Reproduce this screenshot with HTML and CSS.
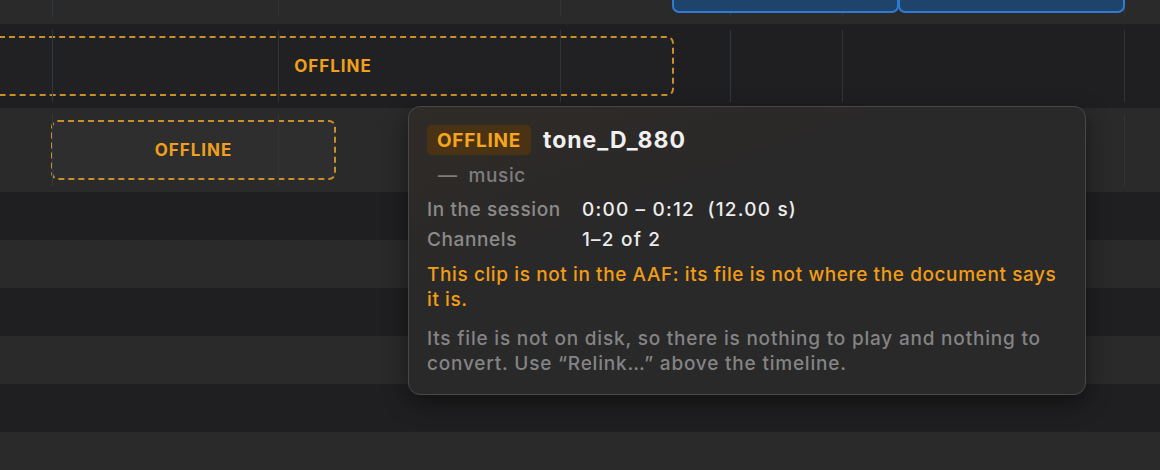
FILE: index.html
```html
<!DOCTYPE html>
<html lang="en">
<head>
<meta charset="utf-8">
<title>Timeline</title>
<link rel="stylesheet" href="styles.css">
</head>
<body>
<div class="timeline">
  <div class="lane lane-top light">
    <span class="grid blue" style="left:52px"></span>
    <span class="grid" style="left:278px"></span>
    <span class="grid" style="left:560px"></span>
    <span class="grid blue" style="left:730px"></span>
    <span class="grid" style="left:842px"></span>
    <span class="grid" style="left:1124px"></span>
    <div class="clip clip-online" style="left:672px;width:227px"></div>
    <div class="clip clip-online" style="left:898px;width:227px"></div>
  </div>
  <div class="lane lane-tall dark">
    <div class="clip clip-offline" style="left:-8px;width:682px"><span>OFFLINE</span></div>
    <span class="grid blue" style="left:52px"></span>
    <span class="grid" style="left:278px"></span>
    <span class="grid" style="left:560px"></span>
    <span class="grid blue" style="left:730px"></span>
    <span class="grid" style="left:842px"></span>
    <span class="grid" style="left:1124px"></span>
  </div>
  <div class="lane lane-tall light">
    <div class="clip clip-offline raised" style="left:51px;width:285px"><span>OFFLINE</span></div>
    <span class="grid blue" style="left:52px"></span>
    <span class="grid" style="left:278px"></span>
    <span class="grid" style="left:560px"></span>
    <span class="grid blue" style="left:730px"></span>
    <span class="grid" style="left:842px"></span>
    <span class="grid" style="left:1124px"></span>
  </div>
  <div class="lane dark"></div>
  <div class="lane light"></div>
  <div class="lane dark"></div>
  <div class="lane light"></div>
  <div class="lane dark"></div>
  <div class="lane light"></div>

  <div class="tooltip">
    <div class="tip-head">
      <span class="badge">OFFLINE</span>
      <span class="tip-title">tone_D_880</span>
    </div>
    <div class="tip-track"><span class="dash">—</span>music</div>
    <dl class="tip-meta">
      <dt>In the session</dt>
      <dd>0:00 – 0:12&nbsp; (12.00 s)</dd>
      <dt>Channels</dt>
      <dd>1–2 of 2</dd>
    </dl>
    <p class="tip-warn">This clip is not in the AAF: its file is not where the document says it is.</p>
    <p class="tip-note">Its file is not on disk, so there is nothing to play and nothing to convert. Use “Relink…” above the timeline.</p>
  </div>
</div>
</body>
</html>
```
FILE: styles.css
```css
* { box-sizing: border-box; }

html, body {
  margin: 0;
  padding: 0;
  background: #1f1f21;
  font-family: "Inter", "Noto Sans", sans-serif;
  overflow: hidden;
}

.timeline {
  position: relative;
  width: 1160px;
  height: 470px;
  display: flex;
  flex-direction: column;
}

.lane {
  position: relative;
  height: 48px;
  flex: none;
}
.lane.light { background: #2a2a2b; }
.lane.dark { background: #1f1f21; }
.lane-top { height: 24px; }
.lane-tall { height: 84px; }

/* beat lines drawn inside each clip lane */
.grid {
  position: absolute;
  top: 6px;
  bottom: 6px;
  width: 1px;
  background: #343437;
}
.grid.blue { background: #2c3a45; }
.lane-top .grid { top: 0; bottom: 7px; }

.clip {
  position: absolute;
  border-radius: 7px;
}

.clip-online {
  top: -40px;
  height: 53px;
  background: #1f446b;
  border: 2px solid #2f7bd3;
}

.clip-offline {
  top: 12px;
  bottom: 12px;
  border: 2px dashed #c88f2c;
  background: rgba(255, 255, 255, 0.012);
  display: flex;
  align-items: center;
  justify-content: center;
}
.clip-offline.raised { background: #2e2e2f; }
.clip-offline span {
  color: #f0a01c;
  font-weight: 700;
  font-size: 17px;
  letter-spacing: 1px;
}

.tooltip {
  position: absolute;
  left: 408px;
  top: 106px;
  width: 678px;
  height: 289px;
  padding: 18px 18px 0;
  border-radius: 12px;
  border: 1px solid #47474a;
  background: linear-gradient(160deg, #2f2b27 0%, #2a2929 35%, #29292a 100%);
  box-shadow: 0 8px 24px rgba(0, 0, 0, 0.45);
  color: #e9e9e9;
  font-size: 19px;
  font-weight: 500;
  letter-spacing: 0.6px;
}

.tip-head {
  display: flex;
  align-items: center;
  gap: 12px;
  height: 30px;
}
.badge {
  display: inline-flex;
  align-items: center;
  height: 30px;
  padding: 0 10px;
  border-radius: 5px;
  background: #4a3315;
  color: #f5a51e;
  font-weight: 700;
  font-size: 19px;
  letter-spacing: 0.7px;
}
.tip-title {
  font-weight: 700;
  font-size: 23px;
  letter-spacing: 1px;
  color: #f0f0f0;
}

.tip-track {
  margin-top: 9px;
  padding-left: 11px;
  line-height: 24px;
  color: #7e7e7e;
}
.tip-track .dash { margin-right: 11px; }

.tip-meta {
  margin: 7px 0 0;
  display: grid;
  grid-template-columns: 155px 1fr;
  line-height: 30px;
}
.tip-meta dt { color: #8b8b8b; }
.tip-meta dd {
  margin: 0;
  color: #ececec;
  letter-spacing: 1.2px;
}

.tip-warn,
.tip-note {
  margin: 7px 0 0;
  line-height: 25px;
}
.tip-warn { color: #f29d16; }
.tip-note {
  margin-top: 14px;
  color: #848484;
  letter-spacing: 0.8px;
}
```
